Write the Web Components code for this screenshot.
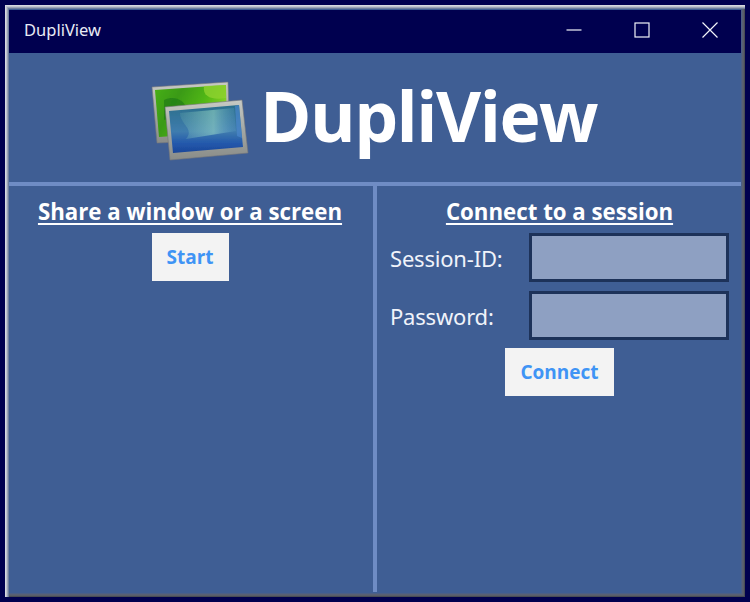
<!DOCTYPE html>
<html>
<head>
<meta charset="utf-8">
<title>DupliView</title>
<style>
  html, body { margin: 0; height: 100%; }
  body { background: #00004f; padding: 5px; box-sizing: border-box; font-family: "Open Sans", "Noto Sans", sans-serif; }
</style>
</head>
<body>
<dv-window>
  <dv-titlebar slot="title">DupliView</dv-titlebar>
  <dv-banner>DupliView</dv-banner>
  <dv-pane slot="left" heading="Share a window or a screen">
    <dv-button>Start</dv-button>
  </dv-pane>
  <dv-pane slot="right" heading="Connect to a session">
    <dv-field label="Session-ID:"></dv-field>
    <dv-field label="Password:"></dv-field>
    <dv-button wide>Connect</dv-button>
  </dv-pane>
</dv-window>
<script>
class DvWindow extends HTMLElement {
  constructor() {
    super();
    this.attachShadow({ mode: 'open' }).innerHTML = `
      <style>
        :host { display: flex; flex-direction: column; height: 100%; box-sizing: border-box; padding: 5px 4px 5px 4px; background: #3f5e94;
          box-shadow: inset 1px 1px 0 #d6d8e0, inset 2px 2px 0 #c0c4ce, inset 3px 3px 0 #9aa3b6, inset 4px 4px 0 #6f7e9e,
            inset -1px -1px 0 #484c56, inset -2px -2px 0 #585d69, inset -3px -3px 0 #586074, inset -4px -4px 0 #4c5f86; }
        .panes { flex: 1; display: grid; grid-template-columns: 364px 4px 1fr; min-height: 0; }
        .divider { background: #6f8cc4; }
      </style>
      <slot name="title"></slot>
      <slot></slot>
      <div class="panes">
        <slot name="left"></slot>
        <div class="divider"></div>
        <slot name="right"></slot>
      </div>`;
  }
}
class DvTitlebar extends HTMLElement {
  constructor() {
    super();
    this.attachShadow({ mode: 'open' }).innerHTML = `
      <style>
        :host { display: flex; align-items: center; height: 43px; box-sizing: border-box; padding: 0 0 4px 15px; background: #00004f; color: #e8ebf5; font: 16.500px "Noto Sans", sans-serif; }
        .text { flex: 1; }
        .btns { display: flex; margin-right: -3px; }
        .btn { width: 68px; height: 39px; display: flex; align-items: center; justify-content: center; }
        svg { width: 16px; height: 16px; fill: none; stroke: #f2f4fa; stroke-width: 1.2; }
      </style>
      <div class="text"><slot></slot></div>
      <div class="btns">
        <div class="btn"><svg viewBox="0 0 16 16"><path d="M0.5 8h15"/></svg></div>
        <div class="btn"><svg viewBox="0 0 16 16"><rect x="1" y="1" width="14" height="14"/></svg></div>
        <div class="btn"><svg viewBox="0 0 16 16"><path d="M.5.5l15 15M15.500.5l-15 15"/></svg></div>
      </div>`;
  }
}
class DvBanner extends HTMLElement {
  constructor() {
    super();
    this.attachShadow({ mode: 'open' }).innerHTML = `
      <style>
        :host { display: flex; align-items: center; justify-content: center; gap: 10px; height: 133px; box-sizing: border-box; padding-right: 3px; border-bottom: 4px solid #6f8cc4; color: #fff; }
        svg { width: 100px; height: 82px; flex: none; margin-top: 6px; }
        h1 { margin: 0 0 4px; font: 700 69.500px/1 "Open Sans", "Noto Sans", sans-serif; letter-spacing: -1.5px; }
      </style>
      <svg viewBox="0 0 100 82">
        <defs>
          <linearGradient id="frame" x1="0" y1="0" x2="0" y2="1">
            <stop offset="0" stop-color="#c8cac4"/><stop offset=".5" stop-color="#a4a8a4"/><stop offset="1" stop-color="#8a8c88"/>
          </linearGradient>
          <linearGradient id="green" x1="0" y1="0" x2="1" y2=".4">
            <stop offset="0" stop-color="#48b014"/><stop offset=".35" stop-color="#3a9a12"/><stop offset=".7" stop-color="#52b814"/><stop offset="1" stop-color="#8cd428"/>
          </linearGradient>
          <linearGradient id="blue" x1="0" y1="0" x2="0" y2="1">
            <stop offset="0" stop-color="#2b6f8c"/><stop offset=".55" stop-color="#3f7cae"/><stop offset=".8" stop-color="#2358ac"/><stop offset="1" stop-color="#1a4699"/>
          </linearGradient>
          <linearGradient id="sheen" x1="0" y1="0" x2="1" y2="0">
            <stop offset="0" stop-color="#9be0c0" stop-opacity=".12"/><stop offset=".6" stop-color="#a5e6cc" stop-opacity=".5"/><stop offset="1" stop-color="#6fb0d8" stop-opacity=".15"/>
          </linearGradient>
          <filter id="soft"><feGaussianBlur stdDeviation=".6"/></filter>
        </defs>
        <g filter="url(#soft)">
          <path d="M2 7L78 2L80 60L7 63Z" fill="url(#frame)" stroke="#74767a" stroke-width=".6"/>
          <path d="M5 10L76 5L77 52L9 57Z" fill="url(#green)"/>
          <path d="M14 20C25 15 36 20 38 33L14 40Z" fill="#1f7a16" opacity=".65"/>
          <path d="M54 6L76 5L76 18C64 20 52 18 54 6Z" fill="#8ed230" opacity=".8"/>
          <path d="M15 27L92 20L98 73L20 80Z" fill="url(#frame)" stroke="#74767a" stroke-width=".6"/>
          <path d="M19 31L89 25L93 67L23 73Z" fill="url(#blue)"/>
          <path d="M30 33L84 28L86 51L36 59C45 49 30 44 30 33Z" fill="url(#sheen)"/>
          <path d="M85 26L89 25L92 58L87 56Z" fill="#4a86cc" opacity=".7"/>
        </g>
      </svg>
      <h1><slot></slot></h1>`;
  }
}
class DvPane extends HTMLElement {
  constructor() {
    super();
    this.attachShadow({ mode: 'open' }).innerHTML = `
      <style>
        :host { display: flex; flex-direction: column; align-items: center; padding: 12px 12px 0 13px; color: #fff; }
        :host([slot="left"]) { padding: 12px 14px 0 12px; }
        h2 { margin: 0 0 7px; font: 700 22.250px/28px "Open Sans", "Noto Sans", sans-serif; text-decoration: underline; text-underline-offset: 3px; white-space: nowrap; }
        .body { display: flex; flex-direction: column; align-items: center; width: 100%; }
      </style>
      <h2></h2>
      <div class="body"><slot></slot></div>`;
    this.shadowRoot.querySelector('h2').textContent = this.getAttribute('heading');
  }
}
class DvField extends HTMLElement {
  constructor() {
    super();
    this.attachShadow({ mode: 'open' }).innerHTML = `
      <style>
        :host { display: grid; grid-template-columns: 139px 200px; align-items: center; margin-bottom: 9px; width: 339px; align-self: flex-start; color: #f0f3fa; }
        :host(:last-of-type) { margin-bottom: 8px; }
        label { font: 22px "Noto Sans", sans-serif; letter-spacing: -.2px; }
        input { box-sizing: border-box; width: 200px; height: 49px; border: 3px solid #1d3259; background: #8ea0c2; padding: 0; outline: none; display: block; }
      </style>
      <label></label><input type="text">`;
    this.shadowRoot.querySelector('label').textContent = this.getAttribute('label');
  }
}
class DvButton extends HTMLElement {
  constructor() {
    super();
    this.attachShadow({ mode: 'open' }).innerHTML = `
      <style>
        :host { display: flex; align-items: center; justify-content: center; width: 77px; height: 48px; background: #f3f3f3; color: #3f94f5; font: 700 19px "Open Sans", "Noto Sans", sans-serif; }
        :host([wide]) { width: 109px; }
      </style>
      <slot></slot>`;
  }
}
customElements.define('dv-window', DvWindow);
customElements.define('dv-titlebar', DvTitlebar);
customElements.define('dv-banner', DvBanner);
customElements.define('dv-pane', DvPane);
customElements.define('dv-field', DvField);
customElements.define('dv-button', DvButton);
</script>
</body>
</html>
